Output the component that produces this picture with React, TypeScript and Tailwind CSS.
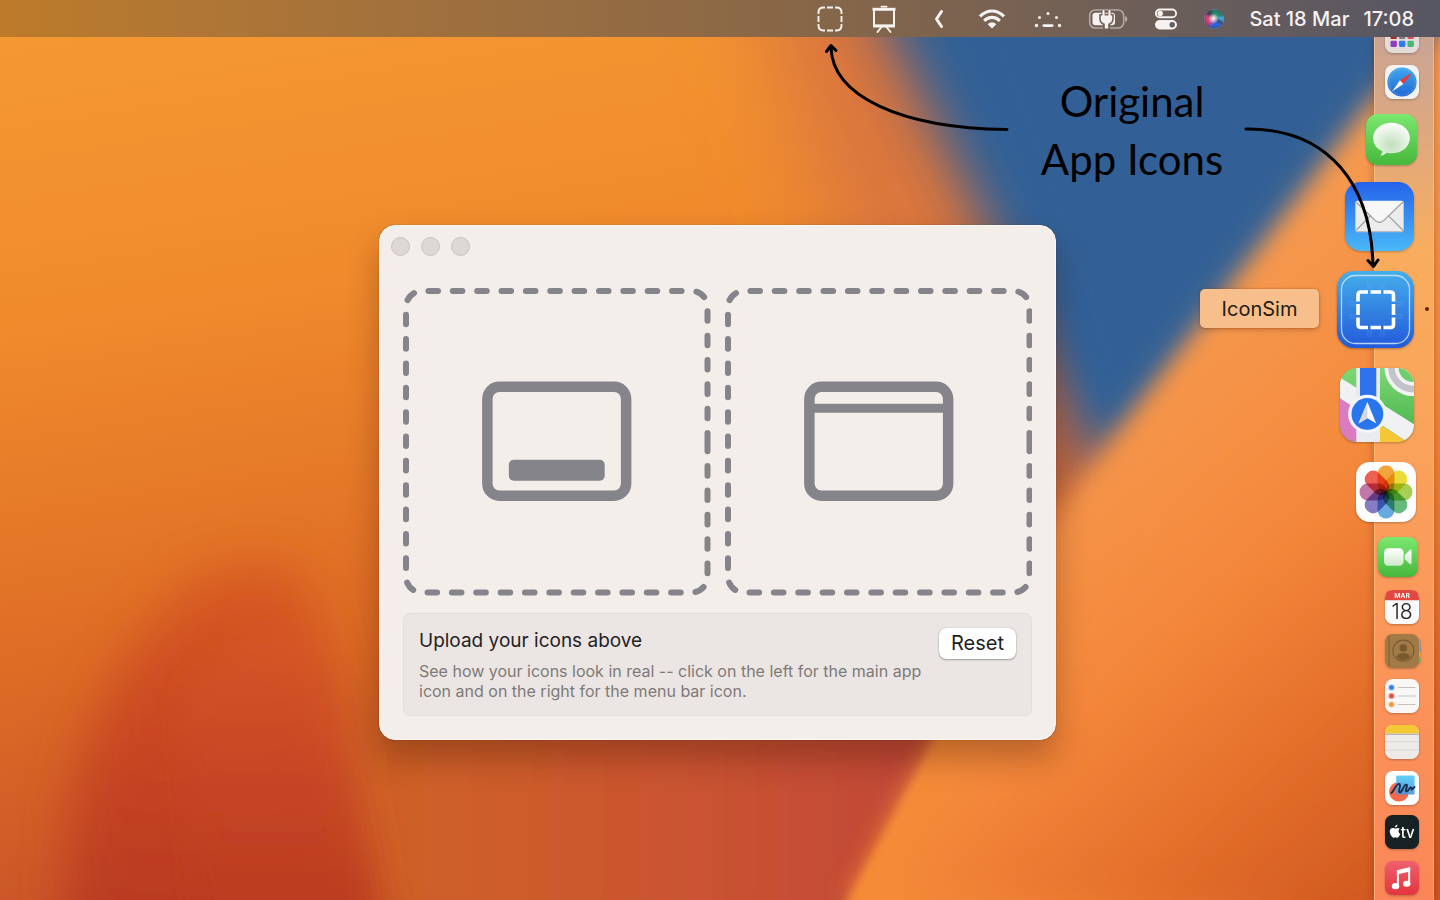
import type { ReactNode } from 'react';

function Wallpaper() {
  return (
    <svg
      className="absolute inset-0 h-full w-full"
      viewBox="0 0 1440 900"
      preserveAspectRatio="none"
      aria-hidden="true"
    >
      <defs>
        <linearGradient id="wpBase" x1="0" y1="0" x2="0.25" y2="1">
          <stop offset="0" stopColor="#f59a33" />
          <stop offset="0.35" stopColor="#f08a2c" />
          <stop offset="0.7" stopColor="#dd6c25" />
          <stop offset="1" stopColor="#c8532a" />
        </linearGradient>
        <linearGradient id="wpRight" gradientUnits="userSpaceOnUse" x1="1060" y1="420" x2="1440" y2="860">
          <stop offset="0" stopColor="#f59a50" />
          <stop offset="0.4" stopColor="#f4873a" />
          <stop offset="0.75" stopColor="#e06a28" />
          <stop offset="1" stopColor="#cf5721" />
        </linearGradient>
        <linearGradient id="wpBlob" x1="0" y1="0" x2="0" y2="1">
          <stop offset="0" stopColor="#d85a24" />
          <stop offset="0.45" stopColor="#c84623" />
          <stop offset="1" stopColor="#b53720" />
        </linearGradient>
        <linearGradient id="wpRed" gradientUnits="userSpaceOnUse" x1="380" y1="0" x2="930" y2="0">
          <stop offset="0" stopColor="#cf6227" />
          <stop offset="0.5" stopColor="#cb5530" />
          <stop offset="1" stopColor="#c04838" />
        </linearGradient>
        <filter id="b60" x="-50%" y="-50%" width="200%" height="200%"><feGaussianBlur stdDeviation="46" /></filter>
        <filter id="b30" x="-50%" y="-50%" width="200%" height="200%"><feGaussianBlur stdDeviation="26" /></filter>
        <filter id="b14" x="-50%" y="-50%" width="200%" height="200%"><feGaussianBlur stdDeviation="13" /></filter>
        <filter id="b4" x="-50%" y="-50%" width="200%" height="200%"><feGaussianBlur stdDeviation="4" /></filter>
      </defs>
      <rect width="1440" height="900" fill="url(#wpBase)" />
      <path d="M300 700 L1000 640 L940 960 L380 960Z" fill="url(#wpRed)" filter="url(#b30)" />
      <path d="M740 -60 L860 -60 L1090 470 L1060 560 L960 560 L860 300Z" fill="#d9743f" filter="url(#b60)" />
      <path d="M60 960 L70 800 Q110 640 200 580 Q260 550 305 580 Q330 700 380 960Z" fill="url(#wpBlob)" filter="url(#b30)" />
      <path d="M200 960 L180 700 Q250 600 312 640 Q340 740 385 960Z" fill="url(#wpBlob)" fillOpacity="0.6" filter="url(#b14)" />
      <path d="M795 -80 L1560 -80 L1090 560 L1030 470 L975 250Z" fill="#b0604e" opacity="0.6" filter="url(#b30)" />
      <path d="M838 -80 L1560 -80 L1105 480 L1075 420 L990 230Z" fill="#306096" filter="url(#b30)" />
      <path d="M930 -80 L1560 -80 L1110 430 L1060 280Z" fill="#306096" filter="url(#b14)" />
      <path d="M1480 -10 L1370 105 L1040 535 L1020 600 L935 740 L846 906 L1480 960Z" fill="url(#wpRight)" filter="url(#b14)" />
      <path d="M1050 620 L985 660 L935 740 L848 900 L840 920 L1300 920 L1200 600Z" fill="#f58b38" filter="url(#b4)" />
      <path d="M1480 -10 L1400 110 L1080 530 L1000 680 L900 900 L1480 960Z" fill="url(#wpRight)" filter="url(#b30)" />
    </svg>
  );
}

function MenuBar() {
  return (
    <header className="relative z-10 flex h-[37px] items-center justify-end bg-gradient-to-r from-[#bd7b2a] via-[#886747] via-55% to-[#565664] pr-[26px] text-[#f6f2ef]">
      <nav aria-label="Menu bar" className="flex items-center">
        <button type="button" aria-label="IconSim" className="mr-7">
          <svg width="26" height="26" viewBox="0 0 26 26" fill="none" stroke="currentColor" strokeWidth="1.9">
            <path d="M1.5 8V6.500Q1.500 1.500 6.500 1.500H8M10 1.500H16M18 1.500H19.500Q24.500 1.500 24.500 6.500V8M24.500 10V16M24.500 18V19.500Q24.500 24.500 19.500 24.500H18M16 24.500H10M8 24.500H6.500Q1.500 24.500 1.500 19.500V18M1.500 16V10" />
          </svg>
        </button>
        <button type="button" aria-label="Presentation" className="mr-[37px]">
          <svg width="26" height="28" viewBox="0 0 26 28" fill="none" stroke="currentColor">
            <path d="M10.500 1.700H15.500" strokeWidth="1.800" strokeLinecap="round" />
            <path d="M1.500 4.300H24.500" strokeWidth="3" />
            <path d="M3 5V20.800H23V5" strokeWidth="2" />
            <path d="M2 21H24" strokeWidth="3" />
            <path d="M10.500 22L6.500 27M15.500 22L19.500 27" strokeWidth="1.900" strokeLinecap="round" />
          </svg>
        </button>
        <button type="button" aria-label="Show hidden items" className="mr-[34px]">
          <svg width="10" height="20" viewBox="0 0 10 20" fill="none" stroke="currentColor" strokeWidth="3" strokeLinecap="round" strokeLinejoin="round">
            <path d="M7.500 2.500L2.500 10L7.500 17.500" />
          </svg>
        </button>
        <button type="button" aria-label="Wi-Fi" className="mr-[28px]">
          <svg width="28" height="22" viewBox="0 0 28 22" fill="none" stroke="currentColor" strokeWidth="3.200">
            <path d="M2 8.400Q7.500 3 14 3T26 8.400" />
            <path d="M6.200 12.800Q9.500 9.300 14 9.300T21.800 12.800" />
            <path d="M14 20.500L9.700 16.200Q11.500 14.200 14 14.200T18.300 16.200Z" fill="currentColor" stroke="none" />
          </svg>
        </button>
        <button type="button" aria-label="Keyboard brightness" className="mr-[26px]">
          <svg width="28" height="18" viewBox="0 0 28 18" fill="currentColor">
            <circle cx="2.500" cy="15.500" r="1.700" />
            <circle cx="25.500" cy="15.500" r="1.700" />
            <circle cx="5.500" cy="7.500" r="1.500" />
            <circle cx="22.500" cy="7.500" r="1.500" />
            <circle cx="14" cy="3.500" r="1.500" />
            <rect x="8.500" y="14.300" width="11" height="2.600" rx="1.300" />
          </svg>
        </button>
        <button type="button" aria-label="Battery charging" className="mr-[26px]">
          <svg width="40" height="22" viewBox="0 0 40 22" fill="none">
            <rect x="1.700" y="2" width="34" height="18" rx="5.500" stroke="currentColor" strokeOpacity="0.5" strokeWidth="1.600" />
            <path d="M37.200 8V14Q39.300 13.300 39.300 11T37.200 8Z" fill="currentColor" fillOpacity="0.55" />
            <rect x="4.500" y="4.800" width="22.500" height="12.400" rx="3" fill="currentColor" />
            <path d="M15.500 2V8M21.500 2V8M13.200 8H23.800V11Q23.500 14.500 20 15.500V20.500H17V15.500Q13.500 14.500 13.200 11Z" fill="#75605a" stroke="#75605a" strokeWidth="4" />
            <path d="M15.500 3V8.500M21.500 3V8.500" stroke="currentColor" strokeWidth="2.200" strokeLinecap="round" />
            <path d="M12.800 7.500H24.200V11Q24 14.800 20.200 15.800V20.500H16.800V15.800Q13 14.800 12.800 11Z" fill="currentColor" />
          </svg>
        </button>
        <button type="button" aria-label="Control Center" className="mr-[25px]">
          <svg width="24" height="22" viewBox="0 0 24 22" fill="none">
            <rect x="1.900" y="1.500" width="20.200" height="7.800" rx="3.900" stroke="currentColor" strokeWidth="1.900" />
            <circle cx="6.200" cy="5.400" r="2.700" fill="currentColor" />
            <rect x="1" y="12" width="22" height="9.500" rx="4.700" fill="currentColor" />
            <circle cx="18.200" cy="16.700" r="2.700" fill="#625d66" />
          </svg>
        </button>
        <button type="button" aria-label="Siri" className="mr-6">
          <svg width="22" height="22" viewBox="0 0 22 22">
            <defs>
              <radialGradient id="siriCore"><stop offset="0" stopColor="#fff" /><stop offset="1" stopColor="#fff" stopOpacity="0" /></radialGradient>
              <filter id="siriBlur"><feGaussianBlur stdDeviation="1.300" /></filter>
              <clipPath id="siriClip"><circle cx="11" cy="11" r="10.300" /></clipPath>
            </defs>
            <circle cx="11" cy="11" r="10.500" fill="#3c3f57" />
            <g clipPath="url(#siriClip)" filter="url(#siriBlur)">
              <path d="M8 2Q16 0 20 8L12 11Z" fill="#218a68" />
              <path d="M2 6Q0 15 7 18L12 10Z" fill="#d83f79" />
              <path d="M6 19Q14 22 20 16L11 12Z" fill="#2f62d8" />
              <path d="M13 10L21 8V14Z" fill="#47b5e8" />
            </g>
            <circle cx="10.500" cy="10.500" r="5.500" fill="url(#siriCore)" />
            <circle cx="11" cy="11" r="10" fill="none" stroke="#a0a0b0" strokeOpacity="0.5" />
          </svg>
        </button>
      </nav>
      <time dateTime="2023-03-18T17:08" className="flex gap-3.5 text-[20px] leading-6 font-medium whitespace-nowrap">
        <span>Sat 18 Mar</span>
        <span>17:08</span>
      </time>
    </header>
  );
}

function DropZone({ label, children }: { label: string; children: ReactNode }) {
  return (
    <button type="button" aria-label={label} className="block">
      <svg className="block h-auto w-full" viewBox="0 0 308 308" fill="none">
        <path
          d="M305 154V289A16 16 0 0 1 289 305H19A16 16 0 0 1 3 289V19A16 16 0 0 1 19 3H289A16 16 0 0 1 305 19Z"
          stroke="#85848a"
          strokeWidth="6"
          strokeLinecap="round"
          strokeDasharray="9.600 14.800"
        />
        <rect x="84.500" y="99" width="139" height="109" rx="12" stroke="#85848a" strokeWidth="10.500" />
        {children}
      </svg>
    </button>
  );
}

function SimWindow() {
  return (
    <section
      aria-label="IconSim window"
      className="w-[677px] rounded-[16px] border border-[#fbf7f4] bg-[#f3eeea] px-[23px] pb-[23px] shadow-[0_0_1px_rgba(0,0,0,0.55),0_18px_32px_rgba(60,20,0,0.32)]"
    >
      <div className="-mx-[12px] flex h-[62px] items-start gap-[11px] pt-[11px]">
        <button type="button" aria-label="Close" className="size-[19px] rounded-full border border-[#c7c3c1] bg-[#dcd8d6]" />
        <button type="button" aria-label="Minimize" className="size-[19px] rounded-full border border-[#c7c3c1] bg-[#dcd8d6]" />
        <button type="button" aria-label="Zoom" className="size-[19px] rounded-full border border-[#c7c3c1] bg-[#dcd8d6]" />
      </div>
      <div className="grid grid-cols-2 gap-[14px]">
        <DropZone label="Upload the main app icon">
          <rect x="106" y="172" width="96" height="21" rx="5" fill="#85848a" />
        </DropZone>
        <DropZone label="Upload the menu bar icon">
          <path d="M84 120.500H224" stroke="#85848a" strokeWidth="9" />
        </DropZone>
      </div>
      <div className="mt-[17px] flex items-start justify-between rounded-[7px] border border-[#e3dedb] bg-[#ebe6e3] px-[15px] pt-[13px] pb-[14px]">
        <div>
          <h1 className="text-[19px] leading-7 text-[#242223]">Upload your icons above</h1>
          <p className="mt-[6px] max-w-[510px] text-[16px] leading-5 text-[#7e7a78]">
            See how your icons look in real -- click on the left for the main app icon and on the right for the menu bar icon.
          </p>
        </div>
        <button type="button" className="mt-px h-[31px] w-[77px] rounded-[7px] bg-white text-[20px] leading-7 text-[#1f1e1f] shadow-[0_0_1px_rgba(0,0,0,0.35),0_1px_2px_rgba(0,0,0,0.3)]">
          Reset
        </button>
      </div>
    </section>
  );
}

function Annotation() {
  return (
    <div className="pointer-events-none absolute top-0 right-0 z-20 h-[280px] w-[640px]">
      <svg className="absolute inset-0" width="640" height="280" viewBox="800 0 640 280" fill="none" stroke="#000" strokeWidth="3" strokeLinecap="round" strokeLinejoin="round" aria-hidden="true">
        <path d="M1007 129.500C900 128 832 96 831 47M826.500 51.500L831 45.500L836 50.500" />
        <path d="M1246 129C1330 128 1371 186 1373 265M1368 260.500L1373.500 266.500L1378 260" />
      </svg>
      <p className="absolute top-[72px] right-[208px] w-[200px] text-center font-['Lato',cursive] text-[42px] leading-[58px] whitespace-nowrap text-black">
        Original
        <br />
        App Icons
      </p>
    </div>
  );
}

function DockItem({ name, className, children }: { name: string; className: string; children: ReactNode }) {
  return (
    <li className={className}>
      <button type="button" aria-label={name} className="block size-full drop-shadow-[0_1px_1px_rgba(0,0,0,0.25)]">
        <svg className="block size-full overflow-visible" viewBox="0 0 100 100">
          {children}
        </svg>
      </button>
    </li>
  );
}

const petals = [
  { angle: 0, color: '#f29a1f' },
  { angle: 45, color: '#ecd71d' },
  { angle: 90, color: '#9fc93c' },
  { angle: 135, color: '#52b36a' },
  { angle: 180, color: '#549fdd' },
  { angle: 225, color: '#766bbd' },
  { angle: 270, color: '#b9669f' },
  { angle: 315, color: '#ee4a3c' },
];

const launchpadDots = [
  '#e8a030', '#5bb8e8', '#e05a90',
  '#b32020', '#7c8086', '#e84a54',
  '#8e3cc0', '#2f7de8', '#45b878',
];

function Dock() {
  return (
    <aside aria-label="Dock" className="absolute top-0 right-[6px] bottom-0 w-[60px] border-x border-[#ffc890]/60 bg-gradient-to-b from-[#c9a493] via-[#f9ad5c] via-25% to-[#fb8658] shadow-[0_0_8px_rgba(90,30,0,0.35)]">
      <ul className="-mt-[18px] flex flex-col items-end pr-[14px]">
        <DockItem name="Launchpad" className="size-[34px] shrink-0">
          <rect width="100" height="100" rx="23" fill="#e4dcd9" />
          {launchpadDots.map((color, i) => (
            <rect key={i} x={16 + (i % 3) * 25} y={18 + Math.floor(i / 3) * 23} width="19" height="18" rx="4" fill={color} />
          ))}
        </DockItem>
        <DockItem name="Safari" className="mt-3 size-[34px] shrink-0">
          <defs>
            <linearGradient id="safari" x2="0" y2="1"><stop stopColor="#40a9ee" /><stop offset="1" stopColor="#2266d2" /></linearGradient>
          </defs>
          <rect width="100" height="100" rx="23" fill="#f2f2f3" />
          <circle cx="50" cy="50" r="43" fill="url(#safari)" />
          <circle cx="50" cy="50" r="38" fill="none" stroke="#b7dcfb" strokeOpacity="0.6" strokeWidth="4" strokeDasharray="1.500 4" />
          <path d="M81 22L44 45L54 56Z" fill="#ec3a32" />
          <path d="M21 78L44 45L54 56Z" fill="#f5f5f5" />
        </DockItem>
        <DockItem name="Messages" className="mt-[15px] mr-[2px] size-[51px] shrink-0">
          <defs>
            <linearGradient id="green" x2="0" y2="1"><stop stopColor="#7be86f" /><stop offset="1" stopColor="#46b83c" /></linearGradient>
            <radialGradient id="bubble" cx="0.5" cy="0.68" r="0.65"><stop stopColor="#c0dfba" /><stop offset="1" stopColor="#fafdf9" /></radialGradient>
          </defs>
          <rect width="100" height="100" rx="23" fill="url(#green)" />
          <path d="M50 17C70 17 86 30 86 47S70 77 50 77Q45 77 41 76Q36 81 28 82Q33 77 32 73Q14 65 14 47C14 30 30 17 50 17Z" fill="url(#bubble)" />
        </DockItem>
        <DockItem name="Mail" className="mt-[17px] mr-[5px] size-[69px] shrink-0">
          <defs>
            <linearGradient id="mail" x2="0" y2="1"><stop stopColor="#2463ea" /><stop offset="1" stopColor="#4ab8f8" /></linearGradient>
          </defs>
          <rect width="100" height="100" rx="23" fill="url(#mail)" />
          <rect x="15" y="27" width="70" height="45" rx="3" fill="#ececec" />
          <path d="M16 70L38 48M84 70L62 48M16 29L44 56Q50 61 56 56L84 29" fill="none" stroke="#a1a1a3" strokeWidth="1.800" />
          <path d="M17 28L44 54Q50 59 56 54L83 28Z" fill="#f7f7f7" />
          <path d="M16 72H84" stroke="#b7bcc4" strokeWidth="2" />
        </DockItem>
        <li className="relative mt-5 mr-[5px] size-[77px] shrink-0">
          <span role="tooltip" className="absolute top-[18px] right-full mr-[18px] flex h-[39px] w-[119px] items-center justify-center rounded-[5px] bg-[#f6bf8b] text-[20px] leading-7 text-[#231a14] shadow-[0_0_2px_rgba(120,50,0,0.5),0_2px_5px_rgba(90,30,0,0.25)]">
            IconSim
          </span>
          <button type="button" aria-label="IconSim" className="block size-full drop-shadow-[0_1px_1px_rgba(0,0,0,0.3)]">
            <svg className="block size-full" viewBox="0 0 77 77" fill="none">
              <defs>
                <linearGradient id="sim" x2="0" y2="1"><stop stopColor="#44aeea" /><stop offset="1" stopColor="#235adb" /></linearGradient>
              </defs>
              <rect width="77" height="77" rx="17" fill="url(#sim)" />
              <rect x="4.500" y="4.500" width="68" height="68" rx="14" stroke="#cfe6fa" strokeOpacity="0.85" strokeWidth="1.300" />
              <path d="M31 11V20M34 11V20M44 11V20M47 11V20M31 58V66M34 58V66M44 58V66M47 58V66M12 31H19M12 34H19M12 44H19M12 47H19M58 31H66M58 34H66M58 44H66M58 47H66" stroke="#8fc5f5" strokeOpacity="0.35" strokeWidth="0.700" />
              <path d="M21 30.500V24Q21 21 24 21H31M33.500 21H44M46.500 21H53.500Q56.500 21 56.500 24V30.500M56.500 33V44M56.500 46.500V53.500Q56.500 56.500 53.500 56.500H46.500M44 56.500H33.500M31 56.500H24Q21 56.500 21 53.500V46.500M21 44V33" stroke="#fff" strokeWidth="3.600" />
            </svg>
          </button>
          <span className="absolute top-[36px] -right-[15px] size-1 rounded-full bg-[#6a1b06]" />
        </li>
        <DockItem name="Maps" className="mt-5 mr-[5px] size-[74px] shrink-0">
          <defs>
            <clipPath id="mapClip"><rect width="100" height="100" rx="23" /></clipPath>
            <linearGradient id="mapGreen" x2="0" y2="1"><stop stopColor="#7dd775" /><stop offset="1" stopColor="#50ba52" /></linearGradient>
          </defs>
          <g clipPath="url(#mapClip)">
            <rect width="100" height="100" fill="url(#mapGreen)" />
            <path d="M0 40L28 58V100H0Z" fill="#d97cc1" />
            <path d="M50 74L92 100H50Z" fill="#f7c636" />
            <path d="M0 13L104 78V108L0 41Z" fill="#f0f1f2" />
            <path d="M54 0H100V76L54 47Z" fill="url(#mapGreen)" />
            <rect x="22" width="32" height="100" fill="#e9ebef" />
            <rect x="27" width="22" height="60" fill="#2f73ec" />
            <circle cx="99" cy="-1" r="39" fill="#f3f3f5" />
            <circle cx="99" cy="-1" r="34" fill="#c3c3ca" />
            <circle cx="99" cy="-1" r="25" fill="#f3f3f5" />
            <circle cx="99" cy="-1" r="20" fill="#70ce6a" />
            <circle cx="37" cy="62" r="26" fill="#f1f4f8" />
            <circle cx="37" cy="62" r="21.500" fill="#2875ee" />
            <path d="M37 46L49 75L37 68L25 75Z" fill="#f9fafb" />
            <path d="M37 46V68L25 75Z" fill="#d5d9df" />
          </g>
        </DockItem>
        <DockItem name="Photos" className="mt-5 mr-[3px] size-[60px] shrink-0">
          <rect width="100" height="100" rx="23" fill="#fdfdfd" />
          {petals.map(({ angle, color }) => (
            <rect
              key={angle}
              x="36"
              y="6"
              width="28"
              height="45"
              rx="13"
              fill={color}
              fillOpacity="0.88"
              transform={`rotate(${angle} 50 50)`}
              className="mix-blend-multiply"
            />
          ))}
        </DockItem>
        <DockItem name="FaceTime" className="mt-[15px] mr-px size-[40px] shrink-0">
          <defs>
            <linearGradient id="cam" x2="0" y2="1"><stop stopColor="#fff" /><stop offset="1" stopColor="#cde9ca" /></linearGradient>
          </defs>
          <rect width="100" height="100" rx="23" fill="url(#green)" />
          <rect x="15" y="28" width="49" height="44" rx="11" fill="url(#cam)" />
          <path d="M67 45L80 32Q84 30 84 35V65Q84 70 80 68L67 56Z" fill="url(#cam)" />
        </DockItem>
        <DockItem name="Calendar" className="mt-[13px] size-[34px] shrink-0">
          <rect width="100" height="100" rx="23" fill="#fafafa" />
          <path d="M0 30V23Q0 0 23 0H77Q100 0 100 23V30Z" fill="#e2483f" />
          <text x="50" y="23" textAnchor="middle" fontSize="20" fontWeight="600" fill="#fff">MAR</text>
          <text x="50" y="85" textAnchor="middle" fontSize="62" fontWeight="300" fill="#222">18</text>
        </DockItem>
        <DockItem name="Contacts" className="mt-[10px] size-[34px] shrink-0">
          <rect x="86" y="15" width="19" height="20" rx="4" fill="#a79b8d" />
          <rect x="86" y="35" width="19" height="18" rx="4" fill="#66a5d0" />
          <rect x="86" y="53" width="19" height="16" rx="4" fill="#e29a45" />
          <rect x="86" y="69" width="19" height="16" rx="4" fill="#6db664" />
          <rect width="100" height="100" rx="23" fill="#a17a47" />
          <path d="M12 4V96" stroke="#805f35" strokeWidth="3" />
          <circle cx="54" cy="49" r="31" fill="none" stroke="#79592f" strokeWidth="3" />
          <circle cx="54" cy="41" r="11" fill="#79592f" />
          <path d="M34 68Q37 56 54 56T74 68Q66 77 54 77T34 68Z" fill="#79592f" />
        </DockItem>
        <DockItem name="Reminders" className="mt-[11px] size-[34px] shrink-0">
          <rect width="100" height="100" rx="23" fill="#f8f7f6" />
          {['#3478f2', '#e24c47', '#ea9a37'].map((color, i) => (
            <g key={color}>
              <circle cx="19" cy={25 + i * 25} r="9.500" fill={color} fillOpacity="0.4" />
              <circle cx="19" cy={25 + i * 25} r="6.500" fill={color} />
              <path d={`M38 ${25 + i * 25}H90`} stroke="#c3c1c0" strokeWidth="3" />
            </g>
          ))}
        </DockItem>
        <DockItem name="Notes" className="mt-3 size-[34px] shrink-0">
          <rect width="100" height="100" rx="23" fill="#ecebe8" />
          <path d="M0 25V23Q0 0 23 0H77Q100 0 100 23V25Z" fill="#f6c934" />
          <path d="M0 27H100" stroke="#a9a59a" strokeWidth="3" />
          <path d="M0 49H100M0 74H100" stroke="#d0ceca" strokeWidth="2" />
        </DockItem>
        <DockItem name="Freeform" className="mt-3 size-[34px] shrink-0">
          <defs>
            <linearGradient id="ffBlue" x2="0" y2="1"><stop stopColor="#55cdf7" /><stop offset="1" stopColor="#4b93dd" /></linearGradient>
          </defs>
          <rect width="100" height="100" rx="23" fill="#fff" />
          <circle cx="41" cy="61" r="29" fill="#f26a49" />
          <rect x="33" y="13" width="54" height="56" rx="3" fill="url(#ffBlue)" fillOpacity="0.92" />
          <path d="M19 65C26 60 32 38 41 38C50 38 36 63 44 63C51 63 55 40 62 40C70 40 56 60 64 60C69 60 72 46 77 49C82 54 72 60 87 47" fill="none" stroke="#15304f" strokeWidth="5.500" strokeLinecap="round" />
        </DockItem>
        <DockItem name="TV" className="mt-[10px] size-[34px] shrink-0">
          <rect width="100" height="100" rx="23" fill="#172022" />
          <path d="M36 39C38 38 41 38 43 41C38 44 39 53 45 55C42 63 38 68 35 67C31 65 30 65 26 67C21 68 14 56 14 48C14 39 22 36 27 39Q30 41 36 39ZM29 37C29 32 33 29 37 28C37 34 33 37 29 37Z" fill="#fff" />
          <text x="46" y="67" fontSize="44" fontWeight="500" fill="#fff">tv</text>
        </DockItem>
        <DockItem name="Music" className="mt-3 size-[34px] shrink-0">
          <defs>
            <linearGradient id="music" x2="0" y2="1"><stop stopColor="#f0606e" /><stop offset="1" stopColor="#e3343f" /></linearGradient>
          </defs>
          <rect width="100" height="100" rx="23" fill="url(#music)" />
          <path d="M35 27L74 18V31L41 38V72H35Z" fill="#fff" />
          <path d="M68 22H74V66H68Z" fill="#fff" />
          <ellipse cx="31" cy="74" rx="11" ry="9" fill="#fff" />
          <ellipse cx="64" cy="67" rx="11" ry="9" fill="#fff" />
        </DockItem>
      </ul>
    </aside>
  );
}

export default function App() {
  return (
    <div className="relative flex min-h-screen flex-col overflow-hidden bg-[#ef8a2c] font-['Inter','Liberation_Sans',sans-serif]">
      <Wallpaper />
      <MenuBar />
      <main className="relative flex flex-1 justify-center pt-[188px] pr-[5px] pb-40">
        <SimWindow />
        <Dock />
      </main>
      <Annotation />
    </div>
  );
}
